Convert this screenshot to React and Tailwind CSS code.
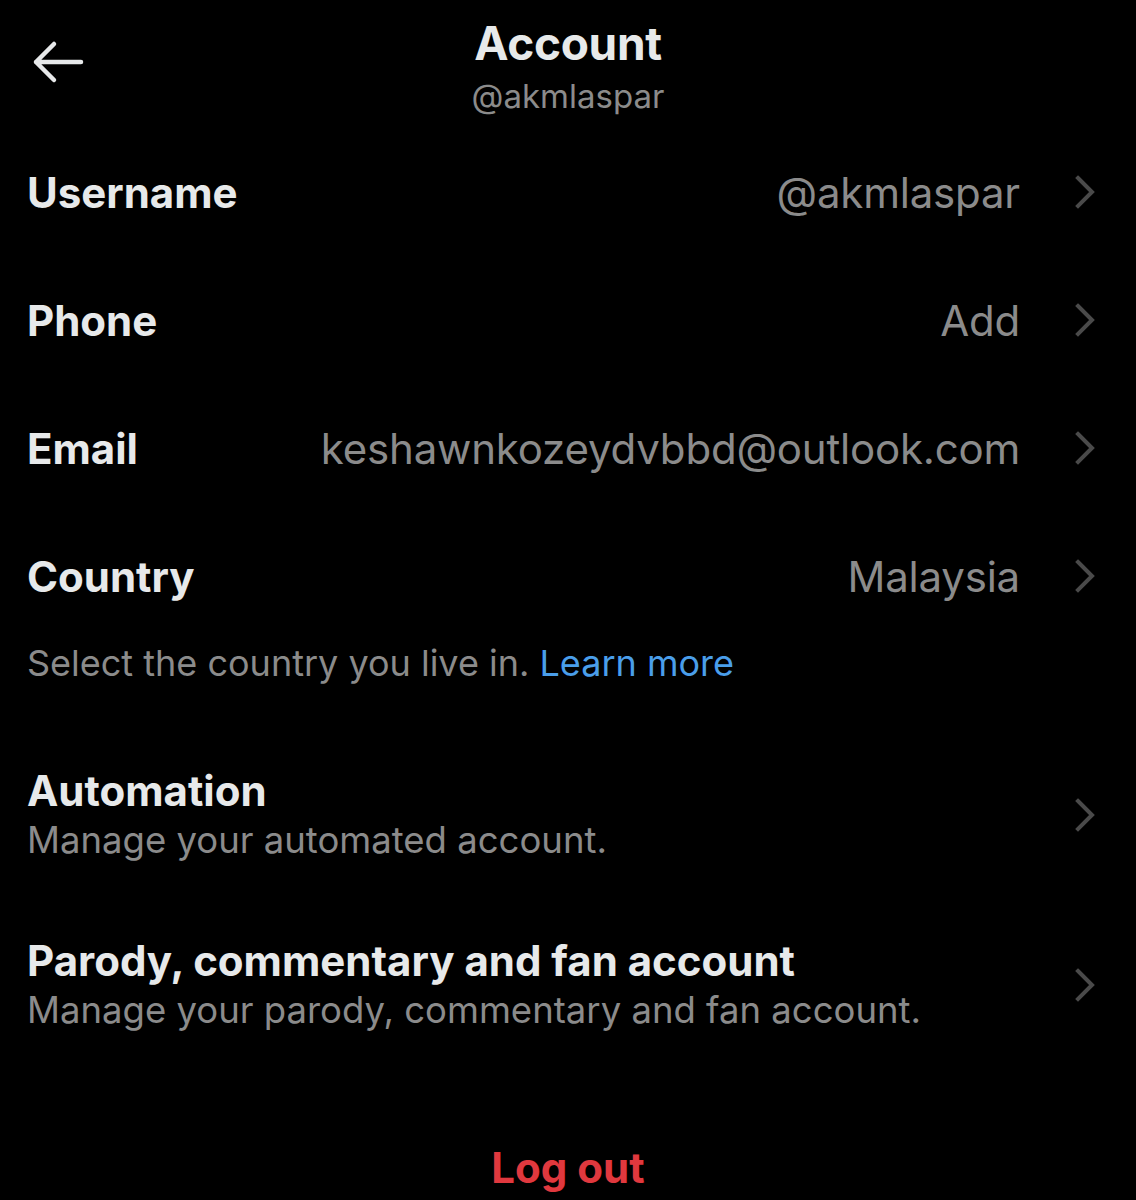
import React from 'react';

const Chevron = () => (
  <svg width="22" height="34" viewBox="0 0 22 34" fill="none" className="shrink-0">
    <path d="M4 3l14 14L4 31" stroke="#4a4a4a" strokeWidth="4" strokeLinecap="square" />
  </svg>
);

const rows = [
  { label: 'Username', value: '@akmlaspar' },
  { label: 'Phone', value: 'Add' },
  { label: 'Email', value: 'keshawnkozeydvbbd@outlook.com' },
  { label: 'Country', value: 'Malaysia' },
];

const blocks = [
  { title: 'Automation', sub: 'Manage your automated account.' },
  { title: 'Parody, commentary and fan account', sub: 'Manage your parody, commentary and fan account.' },
];

export default function App() {
  return (
    <div className="w-[1136px] h-[1200px] bg-black overflow-hidden font-['Inter',sans-serif] text-[#e7e9ea]">
      {/* Header */}
      <div className="grid grid-cols-[1fr_auto_1fr] items-start h-[128px] px-[32px]">
        <div className="pt-[40px]">
          <svg width="52" height="44" viewBox="0 0 52 44" fill="none">
            <path d="M49 22H4M22 4L4 22l18 18" stroke="#e7e9ea" strokeWidth="4.5" strokeLinecap="round" strokeLinejoin="round" />
          </svg>
        </div>
        <div className="flex flex-col items-center pt-[14px]">
          <div className="text-[46px] leading-[58px] font-bold tracking-[-0.3px]">Account</div>
          <div className="text-[33px] leading-[40px] text-[#8b8b8b] mt-[4px]">@akmlaspar</div>
        </div>
        <div />
      </div>

      {/* Rows */}
      {rows.map((r) => (
        <div key={r.label} className="flex items-center h-[128px] pl-[27px] pr-[40px]">
          <div className="text-[42px] font-bold flex-1">{r.label}</div>
          <div className="text-[42px] text-[#8b8b8b] mr-[54px] tracking-[-0.2px]">{r.value}</div>
          <Chevron />
        </div>
      ))}

      <div className="pl-[27px] text-[36px] leading-[46px] text-[#8b8b8b]">
        Select the country you live in. <span className="text-[#4a9eea]">Learn more</span>
      </div>

      <div className="mt-[80px] flex flex-col gap-[72px]">
        {blocks.map((b) => (
          <div key={b.title} className="flex items-center pl-[27px] pr-[40px]">
            <div className="flex-1">
              <div className="text-[42px] leading-[50px] font-bold">{b.title}</div>
              <div className="text-[36.5px] leading-[48px] text-[#8b8b8b]">{b.sub}</div>
            </div>
            <Chevron />
          </div>
        ))}
      </div>

      <div className="mt-[109px] text-center text-[42px] leading-[50px] font-bold text-[#e0383e]">Log out</div>
    </div>
  );
}
